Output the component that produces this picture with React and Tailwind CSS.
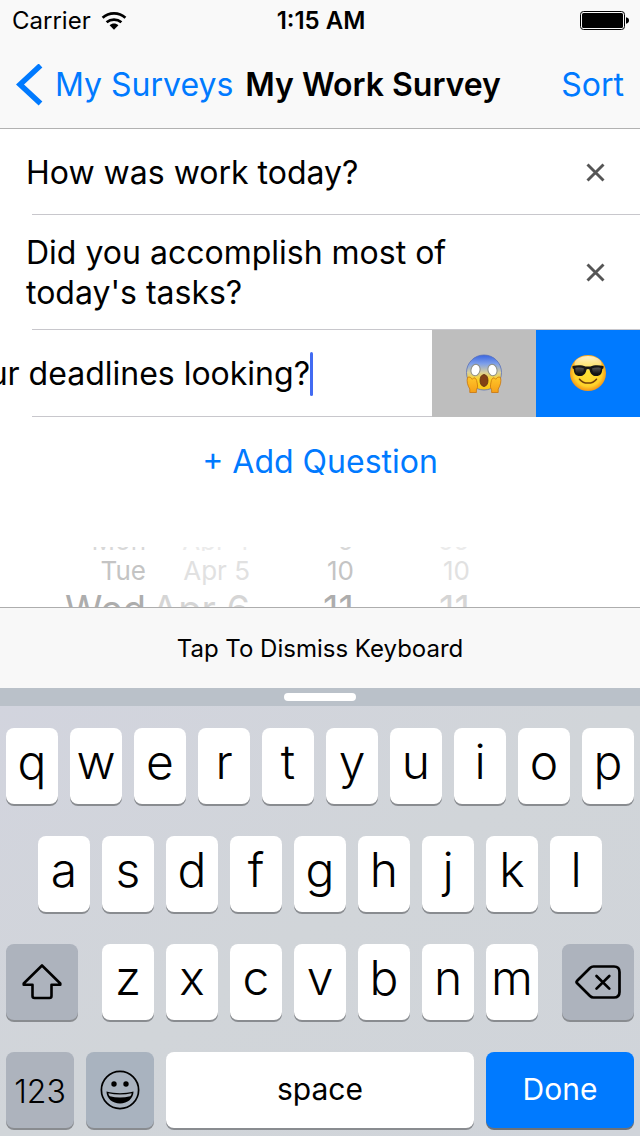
import React from "react";

const rowOne = ["q", "w", "e", "r", "t", "y", "u", "i", "o", "p"];
const rowTwo = ["a", "s", "d", "f", "g", "h", "j", "k", "l"];
const rowThree = ["z", "x", "c", "v", "b", "n", "m"];

function WifiIcon() {
  return (
    <svg width="26" height="20" viewBox="0 0 26 20" aria-hidden="true">
      <g fill="none" stroke="#000" strokeWidth="2.700">
        <path d="M1.600 6.800C8 1 18 1 24.400 6.800" />
        <path d="M5.600 11.300c4.400-3.700 10.400-3.700 14.800 0" />
      </g>
      <path d="M8.600 14.300c2.600-2.300 6.200-2.300 8.800 0L13 18.700z" />
    </svg>
  );
}

function BatteryIcon() {
  return (
    <svg width="50" height="20" viewBox="0 0 50 20" aria-label="Battery full">
      <rect x=".5" y=".5" width="44" height="18" rx="3" fill="none" stroke="#000" />
      <rect x="2" y="2" width="41" height="15" rx="1.500" />
      <path d="M46 6.300c2 .3 3 1.600 3 3.200s-1 2.900-3 3.200z" />
    </svg>
  );
}

function CrossIcon() {
  return (
    <svg width="20" height="20" viewBox="0 0 20 20" aria-hidden="true">
      <path d="M1.500 1.500l16 16M17.500 1.500l-16 16" stroke="#555" strokeWidth="2.900" />
    </svg>
  );
}

function ScreamFace() {
  return (
    <svg width="38" height="40" viewBox="0 0 38 40" aria-hidden="true">
      <defs>
        <linearGradient id="fear" x1="0" y1="0" x2="0" y2="1">
          <stop offset="0" stopColor="#3a66e0" />
          <stop offset=".25" stopColor="#7d9fea" />
          <stop offset=".5" stopColor="#d8cf9c" />
          <stop offset=".68" stopColor="#fbd32c" />
          <stop offset="1" stopColor="#fbc516" />
        </linearGradient>
        <linearGradient id="hand" x1="0" y1="0" x2="0" y2="1">
          <stop offset="0" stopColor="#ffc62a" />
          <stop offset="1" stopColor="#f5a018" />
        </linearGradient>
      </defs>
      <circle cx="19" cy="18.500" r="17.500" fill="url(#fear)" stroke="#5870ba" strokeWidth=".8" />
      <ellipse cx="10.500" cy="16" rx="4.500" ry="5.800" fill="#fff" stroke="#8b8c80" strokeWidth="1" transform="rotate(15 10.500 16)" />
      <ellipse cx="27.500" cy="16" rx="4.500" ry="5.800" fill="#fff" stroke="#8b8c80" strokeWidth="1" transform="rotate(-15 27.500 16)" />
      <ellipse cx="19" cy="26.500" rx="4" ry="6" fill="#824015" stroke="#5d2d10" strokeWidth=".8" />
      <g fill="url(#hand)" stroke="#c9750c" strokeWidth=".8">
        <path d="M2.500 23.500c2-1.200 3.600 0 4.800 1.800l1.500-1.500c2 0 2.800 2 3.200 4.500.5 2.500 1.200 5-.6 7.500V38.500H4.800V35C2.500 31.500 1.500 27 2.500 23.500z" />
        <path d="M35.500 23.500c-2-1.200-3.600 0-4.800 1.800l-1.500-1.500c-2 0-2.800 2-3.200 4.500-.5 2.500-1.200 5 .6 7.500V38.500h6.600V35c2.300-3.500 3.300-8 2.300-11.500z" />
      </g>
    </svg>
  );
}

function CoolFace() {
  return (
    <svg width="38" height="40" viewBox="0 0 38 40" aria-hidden="true">
      <defs>
        <radialGradient id="sun" cx=".5" cy=".48" r=".52">
          <stop offset="0" stopColor="#ffe236" />
          <stop offset=".75" stopColor="#ffd22b" />
          <stop offset="1" stopColor="#f49316" />
        </radialGradient>
        <linearGradient id="shine" x1="0" y1="0" x2="0" y2="1">
          <stop offset="0" stopColor="#fff" stopOpacity=".75" />
          <stop offset="1" stopColor="#fff" stopOpacity=".1" />
        </linearGradient>
        <linearGradient id="lens" x1="0" y1="0" x2="0" y2="1">
          <stop offset="0" stopColor="#555" />
          <stop offset="1" stopColor="#0c0c0c" />
        </linearGradient>
      </defs>
      <circle cx="19" cy="19" r="18" fill="url(#sun)" />
      <ellipse cx="19" cy="9.500" rx="13.500" ry="7.500" fill="url(#shine)" />
      <path d="M3.500 12c5-1.200 10-1 13 .5h5c3-1.500 8-1.700 13-.5v2.300l-1.200.8c-.3 4.500-1.800 7-6 7-4 0-6-2.500-6.800-6.600-.8-.8-2.200-.8-3 0-.8 4.100-2.800 6.600-6.800 6.600-4.200 0-5.700-2.500-6-7l-1.200-.8z" fill="#151515" />
      <path d="M6.300 14c3-.7 6.300-.6 8.700.6-.5 3.800-1.800 5.900-4.600 5.900-3 0-4-2.200-4.100-6.500zM31.700 14c-3-.7-6.300-.6-8.700.6.5 3.800 1.800 5.900 4.600 5.900 3 0 4-2.200 4.100-6.500z" fill="url(#lens)" />
      <path d="M10.500 25.200c4.200 5.200 12.800 5.200 17 0" fill="none" stroke="#70400b" strokeWidth="1.500" strokeLinecap="round" />
    </svg>
  );
}

function ShiftIcon() {
  return (
    <svg width="42" height="38" viewBox="0 0 42 38" aria-hidden="true">
      <path d="M21 2.500L39.300 20.500v1.300H30.500V33q0 2-2 2h-15q-2 0-2-2V21.800H2.700v-1.300z" fill="none" stroke="#000" strokeWidth="2.600" strokeLinejoin="round" />
    </svg>
  );
}

function DeleteIcon() {
  return (
    <svg width="48" height="36" viewBox="0 0 48 36" aria-hidden="true">
      <g fill="none" stroke="#000" strokeWidth="2.700" strokeLinecap="round" strokeLinejoin="round">
        <path d="M19.500 2.500H40q5.500 0 5.500 5.500v20q0 5.500-5.500 5.500H19.500q-2 0-3.500-1.500L3.200 19.300q-1.300-1.300 0-2.600L16 4q1.500-1.500 3.500-1.500z" />
        <path d="M22.500 12l12.800 12.600M35.300 12L22.500 24.600" />
      </g>
    </svg>
  );
}

function SmileyIcon() {
  return (
    <svg width="40" height="40" viewBox="0 0 40 40" aria-hidden="true">
      <circle cx="20" cy="20" r="18.600" fill="none" stroke="#000" strokeWidth="1.700" />
      <circle cx="14" cy="14" r="2.700" />
      <circle cx="26" cy="14" r="2.700" />
      <path d="M6.500 21.500c8.500 2.300 18.500 2.300 27 0 0 7-6 12-13.500 12s-13.500-5-13.500-12z" />
      <path d="M8.300 23.300c7.500 1.700 15.900 1.700 23.400 0-.2 1.200-.8 2.300-1.500 3-6.800 1.700-13.600 1.700-20.400 0-.7-.7-1.300-1.800-1.500-3z" fill="#adb4be" />
    </svg>
  );
}

function LetterKey({ letter }) {
  return (
    <button type="button" className="flex h-[76px] min-w-0 flex-1 items-center justify-center rounded-lg bg-white pb-2 text-5xl font-[350] shadow-[0_2px_0_#898c90]">
      {letter}
    </button>
  );
}

function QuestionRow({ text }) {
  return (
    <li className="relative flex min-h-[86px] items-center justify-between pt-[18px] pr-[34px] pb-[17px] pl-[26px] after:absolute after:right-0 after:bottom-0 after:left-8 after:h-px after:bg-[#c8c7cc]">
      <span className="max-w-[460px] text-[32px] leading-10">{text}</span>
      <button type="button" aria-label={`Remove question: ${text}`}>
        <CrossIcon />
      </button>
    </li>
  );
}

function PickerRow({ day, date, hour, minute, className }) {
  return (
    <div className={`grid shrink-0 grid-cols-[146px_104px_104px_116px] items-center text-right ${className}`}>
      <span>{day}</span>
      <span className="opacity-50">{date}</span>
      <span>{hour}</span>
      <span className="opacity-50">{minute}</span>
    </div>
  );
}

export default function App() {
  return (
    <div className="flex min-h-screen flex-col overflow-hidden bg-white font-['Inter','Liberation_Sans',sans-serif] text-black">
      <header className="border-b border-[#b2b2b2] bg-[#f9f9f9]">
        <div className="grid h-10 grid-cols-[1fr_auto_1fr] items-center pt-[2px] pr-[10px] pl-3 text-2xl">
          <div className="flex items-center gap-[10px]">
            <span>Carrier</span>
            <WifiIcon />
          </div>
          <span className="font-semibold">1:15 AM</span>
          <div className="flex justify-end">
            <BatteryIcon />
          </div>
        </div>
        <nav className="flex h-[88px] items-center px-4 pt-[2px] text-[32px] whitespace-nowrap">
          <a href="#surveys" className="flex items-center gap-3 text-[#007aff]">
            <svg width="27" height="42" viewBox="0 0 27 42" aria-hidden="true">
              <path d="M24.500 1.500L4 20.500l20.500 19" fill="none" stroke="#007aff" strokeWidth="5.500" />
            </svg>
            My Surveys
          </a>
          <h1 className="ml-3 flex-1 font-semibold">My Work Survey</h1>
          <button type="button" className="text-[#007aff]">Sort</button>
        </nav>
      </header>

      <main className="flex flex-1 flex-col">
        <ul>
          <QuestionRow text="How was work today?" />
          <QuestionRow text="Did you accomplish most of today's tasks?" />
          <li className="flex h-[87px]">
            <div className="relative flex min-w-0 flex-1 items-center overflow-hidden after:absolute after:right-0 after:bottom-0 after:left-8 after:h-px after:bg-[#c8c7cc]">
              <div className="flex w-[310px] justify-end overflow-hidden">
                <input
                  type="text"
                  aria-label="Question text"
                  defaultValue="How are your deadlines looking?"
                  className="w-[600px] shrink-0 bg-transparent text-right text-[32px] leading-10 outline-none"
                />
              </div>
              <span className="h-11 w-[3px] rounded-full bg-[#426bf2]" />
            </div>
            <button type="button" aria-label="Negative question" className="flex w-[104px] items-center justify-center bg-[#bebebe]">
              <ScreamFace />
            </button>
            <button type="button" aria-label="Positive question" className="flex w-[104px] items-center justify-center bg-[#007aff]">
              <CoolFace />
            </button>
          </li>
        </ul>
        <button type="button" className="h-[90px] text-[32px] text-[#007aff]">+ Add Question</button>
        <div className="mt-10 flex h-[60px] flex-col overflow-hidden">
          <div className="flex h-1 shrink-0 flex-col justify-end overflow-hidden">
            <PickerRow day="Mon" date="Apr 4" hour="9" minute="09" className="h-5 text-[26px] leading-5 text-[#d8d8d8]" />
          </div>
          <PickerRow day="Tue" date="Apr 5" hour="10" minute="10" className="h-[34px] text-[26px] text-[#c4c4c4]" />
          <PickerRow day="Wed" date="Apr 6" hour="11" minute="11" className="h-12 text-[38px] leading-[48px] text-[#adadad]" />
        </div>
      </main>

      <section aria-label="Keyboard">
        <button type="button" className="flex h-[81px] w-full items-center justify-center border-t border-[#adadad] bg-[#f8f8f8] pt-[2px] text-2xl">
          Tap To Dismiss Keyboard
        </button>
        <div className="flex h-[18px] items-center justify-center bg-[#bac1c9]">
          <span className="h-2 w-[72px] rounded-full bg-white" />
        </div>
        <div className="flex flex-col gap-8 bg-linear-to-br from-[#d2d4de] via-[#d1d5d9] to-[#d0d4da] px-[6px] pt-[22px] pb-2">
          <div className="flex gap-3">
            {rowOne.map((k) => <LetterKey key={k} letter={k} />)}
          </div>
          <div className="flex gap-3 px-8">
            {rowTwo.map((k) => <LetterKey key={k} letter={k} />)}
          </div>
          <div className="flex gap-6">
            <button type="button" aria-label="Shift" className="flex h-[76px] w-[72px] items-center justify-center rounded-lg bg-[#adb3bd] shadow-[0_2px_0_#898c90]">
              <ShiftIcon />
            </button>
            <div className="flex flex-1 gap-3">
              {rowThree.map((k) => <LetterKey key={k} letter={k} />)}
            </div>
            <button type="button" aria-label="Delete" className="flex h-[76px] w-[72px] items-center justify-center rounded-lg bg-[#adb3bd] shadow-[0_2px_0_#898c90]">
              <DeleteIcon />
            </button>
          </div>
          <div className="flex gap-3 text-[30px]">
            <button type="button" className="flex h-[76px] w-[68px] items-center justify-center rounded-lg bg-[#adb3bd] pt-1 text-[32px] font-light shadow-[0_2px_0_#898c90]">
              123
            </button>
            <button type="button" aria-label="Emoji" className="flex h-[76px] w-[68px] items-center justify-center rounded-lg bg-[#a9b3bf] shadow-[0_2px_0_#898c90]">
              <SmileyIcon />
            </button>
            <button type="button" className="h-[76px] flex-1 rounded-lg bg-white pb-[2px] shadow-[0_2px_0_#898c90]">
              space
            </button>
            <button type="button" className="h-[76px] w-[148px] rounded-lg bg-[#007aff] pb-[2px] text-white shadow-[0_2px_0_#6d7278]">
              Done
            </button>
          </div>
        </div>
      </section>
    </div>
  );
}
